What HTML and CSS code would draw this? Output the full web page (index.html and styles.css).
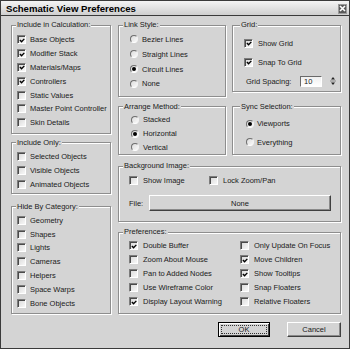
FILE: index.html
```html
<!DOCTYPE html>
<html lang="en">
<head>
    <meta charset="UTF-8">
    <title>Schematic View Preferences</title>
    <link rel="stylesheet" href="styles.css">
</head>
<body>

    <div class="dialog">
        <div class="titlebar">
            <span class="title">Schematic View Preferences</span>
            <span class="close">
                <svg width="7" height="7" viewBox="0 0 7 7"><path d="M1 1 L6 6 M6 1 L1 6" stroke="#fff" stroke-width="1.6"/></svg>
            </span>
        </div>

        <div class="body">
            <div class="col-left">
                <fieldset class="group g-calc">
                    <legend>Include in Calculation:</legend>
                    <div class="rows">
                        <label class="row"><span class="cb on"><svg viewBox="0 0 7 7"><path d="M1 3 L3 5 L6.2 1.6" fill="none" stroke="#000" stroke-width="1.6"/></svg></span>Base Objects</label>
                        <label class="row"><span class="cb on"><svg viewBox="0 0 7 7"><path d="M1 3 L3 5 L6.2 1.6" fill="none" stroke="#000" stroke-width="1.6"/></svg></span>Modifier Stack</label>
                        <label class="row"><span class="cb on"><svg viewBox="0 0 7 7"><path d="M1 3 L3 5 L6.2 1.6" fill="none" stroke="#000" stroke-width="1.6"/></svg></span>Materials/Maps</label>
                        <label class="row"><span class="cb on"><svg viewBox="0 0 7 7"><path d="M1 3 L3 5 L6.2 1.6" fill="none" stroke="#000" stroke-width="1.6"/></svg></span>Controllers</label>
                        <label class="row"><span class="cb"></span>Static Values</label>
                        <label class="row"><span class="cb"></span>Master Point Controller</label>
                        <label class="row"><span class="cb"></span>Skin Details</label>
                    </div>
                </fieldset>

                <fieldset class="group g-only">
                    <legend>Include Only:</legend>
                    <div class="rows">
                        <label class="row"><span class="cb"></span>Selected Objects</label>
                        <label class="row"><span class="cb"></span>Visible Objects</label>
                        <label class="row"><span class="cb"></span>Animated Objects</label>
                    </div>
                </fieldset>

                <fieldset class="group g-hide">
                    <legend>Hide By Category:</legend>
                    <div class="rows">
                        <label class="row"><span class="cb"></span>Geometry</label>
                        <label class="row"><span class="cb"></span>Shapes</label>
                        <label class="row"><span class="cb"></span>Lights</label>
                        <label class="row"><span class="cb"></span>Cameras</label>
                        <label class="row"><span class="cb"></span>Helpers</label>
                        <label class="row"><span class="cb"></span>Space Warps</label>
                        <label class="row"><span class="cb"></span>Bone Objects</label>
                    </div>
                </fieldset>
            </div>

            <div class="col-main">
                <div class="pair pair-top">
                    <fieldset class="group g-link">
                        <legend>Link Style:</legend>
                        <div class="rows">
                            <label class="row"><span class="rb"></span>Bezier Lines</label>
                            <label class="row"><span class="rb"></span>Straight Lines</label>
                            <label class="row"><span class="rb on"></span>Circuit Lines</label>
                            <label class="row"><span class="rb"></span>None</label>
                        </div>
                    </fieldset>

                    <fieldset class="group g-grid">
                        <legend>Grid:</legend>
                        <div class="rows">
                            <label class="row"><span class="cb on"><svg viewBox="0 0 7 7"><path d="M1 3 L3 5 L6.2 1.6" fill="none" stroke="#000" stroke-width="1.6"/></svg></span>Show Grid</label>
                            <label class="row"><span class="cb on"><svg viewBox="0 0 7 7"><path d="M1 3 L3 5 L6.2 1.6" fill="none" stroke="#000" stroke-width="1.6"/></svg></span>Snap To Grid</label>
                            <div class="row spacing-row">
                                <span class="spacing-label">Grid Spacing:</span>
                                <span class="field">10</span>
                                <span class="spinner">
                                    <svg width="6" height="12" viewBox="0 0 6 12"><path d="M3 2 L5 4.5 L1 4.5 Z M1 7.5 L5 7.5 L3 10 Z" fill="#222"/><path d="M0 6 H6" stroke="#888" stroke-width="1"/></svg>
                                </span>
                            </div>
                        </div>
                    </fieldset>
                </div>

                <div class="pair pair-mid">
                    <fieldset class="group g-arrange">
                        <legend>Arrange Method:</legend>
                        <div class="rows">
                            <label class="row"><span class="rb"></span>Stacked</label>
                            <label class="row"><span class="rb on"></span>Horizontal</label>
                            <label class="row"><span class="rb"></span>Vertical</label>
                        </div>
                    </fieldset>

                    <fieldset class="group g-sync">
                        <legend>Sync Selection:</legend>
                        <div class="rows">
                            <label class="row"><span class="rb on"></span>Viewports</label>
                            <label class="row"><span class="rb"></span>Everything</label>
                        </div>
                    </fieldset>
                </div>

                <fieldset class="group g-bg">
                    <legend>Background Image:</legend>
                    <div class="rows">
                        <div class="row">
                            <label class="check-inline show-image"><span class="cb"></span>Show Image</label>
                            <label class="check-inline"><span class="cb"></span>Lock Zoom/Pan</label>
                        </div>
                        <div class="file-row">
                            <span class="file-label">File:</span>
                            <span class="btn file-btn">None</span>
                        </div>
                    </div>
                </fieldset>

                <fieldset class="group g-prefs">
                    <legend>Preferences:</legend>
                    <div class="pref-cols">
                        <div class="rows">
                            <label class="row"><span class="cb on"><svg viewBox="0 0 7 7"><path d="M1 3 L3 5 L6.2 1.6" fill="none" stroke="#000" stroke-width="1.6"/></svg></span>Double Buffer</label>
                            <label class="row"><span class="cb"></span>Zoom About Mouse</label>
                            <label class="row"><span class="cb"></span>Pan to Added Nodes</label>
                            <label class="row"><span class="cb"></span>Use Wireframe Color</label>
                            <label class="row"><span class="cb on"><svg viewBox="0 0 7 7"><path d="M1 3 L3 5 L6.2 1.6" fill="none" stroke="#000" stroke-width="1.6"/></svg></span>Display Layout Warning</label>
                        </div>
                        <div class="rows">
                            <label class="row"><span class="cb"></span>Only Update On Focus</label>
                            <label class="row"><span class="cb on"><svg viewBox="0 0 7 7"><path d="M1 3 L3 5 L6.2 1.6" fill="none" stroke="#000" stroke-width="1.6"/></svg></span>Move Children</label>
                            <label class="row"><span class="cb on"><svg viewBox="0 0 7 7"><path d="M1 3 L3 5 L6.2 1.6" fill="none" stroke="#000" stroke-width="1.6"/></svg></span>Show Tooltips</label>
                            <label class="row"><span class="cb"></span>Snap Floaters</label>
                            <label class="row"><span class="cb"></span>Relative Floaters</label>
                        </div>
                    </div>
                </fieldset>
            </div>
        </div>

        <div class="buttons">
            <span class="btn btn-default"><span class="focus">OK</span></span>
            <span class="btn btn-cancel">Cancel</span>
        </div>
    </div>

</body>
</html>
```

FILE: styles.css
```css
* {
    box-sizing: border-box;
}

body {
    margin: 0;
    background: #d4d4d4;
    font-family: 'Liberation Sans', Arial, sans-serif;
    font-size: 7.5px;
    color: #1a1a1a;
}

.dialog {
    width: 350px;
    height: 349px;
    border: 1px solid #3a3a3a;
    background: #d4d4d4;
    display: flex;
    flex-direction: column;
}

/* Title bar */
.titlebar {
    height: 15px;
    flex: none;
    display: flex;
    align-items: center;
    justify-content: space-between;
    padding: 1px 2px 0 5px;
    background: linear-gradient(#f4f4f4, #cfcfcf);
    border-bottom: 1px solid #3a3a3a;
}

.title {
    font-weight: bold;
    font-size: 9.6px;
    color: #000;
}

.close {
    width: 9px;
    height: 10px;
    display: flex;
    align-items: center;
    justify-content: center;
    background: #5a5a5a;
    border: 1px solid #9a9a9a;
}

/* Main layout */
.body {
    display: flex;
    gap: 7px;
    padding: 4px 8px 0 10px;
}

.col-left {
    width: 100px;
    display: flex;
    flex-direction: column;
}

.col-main {
    flex: 1;
    display: flex;
    flex-direction: column;
}

.pair {
    display: flex;
    gap: 6px;
}

.pair-top {
    align-items: flex-start;
}

.pair-mid {
    margin-top: 5px;
}

.g-link { width: 108px; }
.g-grid { width: 109px; }
.g-arrange { width: 108px; }
.g-sync { width: 109px; }

/* Group boxes */
.group {
    margin: 0;
    padding: 0;
    min-width: 0;
    border: 1px solid #8e8e8e;
    box-shadow: inset 1px 1px 0 #fff, 1px 1px 0 #fff;
}

.group legend {
    margin-left: 4px;
    padding: 0 1px;
    line-height: 10px;
    background: #d4d4d4;
}

.g-grid legend,
.g-sync legend {
    margin-left: 7px;
}

.rows {
    display: flex;
    flex-direction: column;
}

.row {
    display: flex;
    align-items: center;
    gap: 4px;
    height: 13.8px;
    white-space: nowrap;
}

.g-calc .rows { padding: 3px 0 3px 5px; }
.g-only { margin-top: 4px; }
.g-only .rows { padding: 2.5px 0 1.5px 5px; }
.g-hide { margin-top: 8px; flex: 1; }
.g-hide .rows { padding: 1.5px 0 0 5px; }

.g-link .rows { padding: 1.8px 0 4.5px 11px; }
.g-link .row { height: 14.9px; gap: 4px; }

.g-grid .rows { padding: 3.9px 0 1px 11px; }
.g-grid .row { height: 18.85px; gap: 5px; }

.g-arrange .rows { padding: 1.1px 0 0 12px; }
.g-arrange .row { gap: 4px; }

.g-sync .rows { padding: 2.8px 0 0 13px; }
.g-sync .row { height: 18.3px; gap: 3px; }

.g-bg { margin-top: 6px; }
.g-bg .rows { padding: 1.7px 9px 9.7px 10px; }
.g-bg .row { height: 14px; }

.g-prefs { margin-top: 5px; }
.g-prefs .rows { padding: 2px 0 4.8px 0; }
.g-prefs .row { height: 13.9px; gap: 5px; }

.pref-cols {
    display: flex;
    padding-left: 10px;
}

.pref-cols .rows:first-child {
    width: 111px;
}

/* Check boxes and radio buttons */
.cb {
    width: 9px;
    height: 9px;
    flex: none;
    display: flex;
    align-items: center;
    justify-content: center;
    border: 1px solid;
    border-color: #7c7c7c #ffffff #ffffff #7c7c7c;
    box-shadow: inset 1px 1px 0 #4a4a4a;
    background: linear-gradient(135deg, #d8d8d8, #f8f8f8);
}

.cb svg {
    width: 7px;
    height: 7px;
    margin: 1px 0 0 1px;
}

.rb {
    width: 8px;
    height: 8px;
    flex: none;
    display: flex;
    align-items: center;
    justify-content: center;
    border-radius: 50%;
    border: 1px solid;
    border-color: #6e6e6e #f4f4f4 #ffffff #6e6e6e;
    background: linear-gradient(135deg, #dcdcdc, #fafafa);
}

.rb.on::after {
    content: "";
    width: 4px;
    height: 4px;
    border-radius: 50%;
    background: #000;
}

.check-inline {
    display: flex;
    align-items: center;
    gap: 5px;
}

.show-image {
    width: 76px;
}

/* Grid spacing spinner */
.spacing-row {
    padding-left: 2px;
    gap: 0;
}

.spacing-label {
    width: 49px;
}

.field {
    width: 22px;
    height: 11px;
    padding-left: 3px;
    line-height: 9px;
    border: 1px solid;
    border-color: #6a6a6a #ffffff #ffffff #6a6a6a;
    background: linear-gradient(#f0f0f0, #ffffff);
}

.spinner {
    margin-left: 3px;
    display: flex;
}

/* Background image file row */
.file-row {
    display: flex;
    align-items: center;
    margin-top: 8.3px;
    height: 16px;
}

.file-label {
    width: 20px;
}

/* Buttons */
.btn {
    display: flex;
    align-items: center;
    justify-content: center;
    background: #d4d4d4;
    border: 1px solid;
    border-color: #ffffff #404040 #404040 #ffffff;
    box-shadow: inset -1px -1px 0 #8a8a8a;
}

.file-btn {
    flex: 1;
    height: 16px;
}

.buttons {
    display: flex;
    justify-content: flex-end;
    gap: 17px;
    padding: 7.5px 8px 0 0;
}

.btn-default {
    width: 52px;
    height: 15px;
    padding: 2px;
    border-color: #000;
    box-shadow: inset 1px 1px 0 #fff, inset -1px -1px 0 #404040;
}

.focus {
    flex: 1;
    align-self: stretch;
    display: flex;
    align-items: center;
    justify-content: center;
    border: 1px dotted #333;
}

.btn-cancel {
    width: 54px;
    height: 15px;
}
```
